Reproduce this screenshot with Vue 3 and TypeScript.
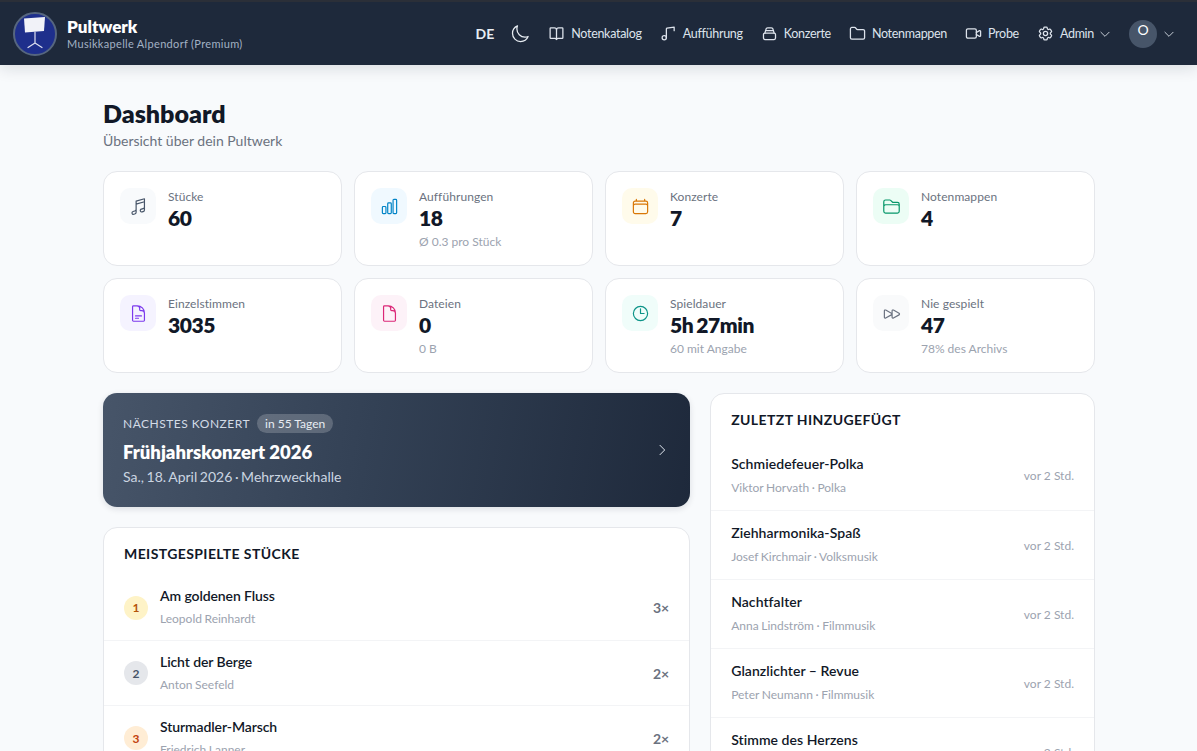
<script setup lang="ts">
interface Stat {
  label: string
  value: string
  sub?: string
  tone: string
  icon: string[]
}

const icons = {
  note: ['m9 9 10.5-3m0 6.553v3.75a2.25 2.25 0 0 1-1.632 2.163l-1.32.377a1.803 1.803 0 1 1-.99-3.467l2.31-.66a2.25 2.25 0 0 0 1.632-2.163Zm0 0V2.25L9 5.25v10.303m0 0v3.75a2.25 2.25 0 0 1-1.632 2.163l-1.32.377a1.803 1.803 0 0 1-.99-3.467l2.31-.66A2.25 2.25 0 0 0 9 15.553Z'],
  chart: ['M3 13.125C3 12.504 3.504 12 4.125 12h2.25c.621 0 1.125.504 1.125 1.125v6.75C7.5 20.496 6.996 21 6.375 21h-2.25A1.125 1.125 0 0 1 3 19.875v-6.75ZM9.75 8.625c0-.621.504-1.125 1.125-1.125h2.25c.621 0 1.125.504 1.125 1.125v11.25c0 .621-.504 1.125-1.125 1.125h-2.25a1.125 1.125 0 0 1-1.125-1.125V8.625ZM16.5 4.125c0-.621.504-1.125 1.125-1.125h2.25C20.496 3 21 3.504 21 4.125v15.75c0 .621-.504 1.125-1.125 1.125h-2.25a1.125 1.125 0 0 1-1.125-1.125V4.125Z'],
  calendar: ['M6.75 3v2.25M17.25 3v2.25M3 18.75V7.5a2.25 2.25 0 0 1 2.25-2.25h13.5A2.25 2.25 0 0 1 21 7.5v11.25m-18 0A2.25 2.25 0 0 0 5.25 21h13.5A2.25 2.25 0 0 0 21 18.75m-18 0v-7.5A2.25 2.25 0 0 1 5.25 9h13.5A2.25 2.25 0 0 1 21 11.25v7.5'],
  folderOpen: ['M2.25 12.75V12A2.25 2.25 0 0 1 4.5 9.75h15A2.25 2.25 0 0 1 21.75 12v.75m-8.69-6.44-2.12-2.12a1.5 1.5 0 0 0-1.061-.44H4.5A2.25 2.25 0 0 0 2.25 6v12a2.25 2.25 0 0 0 2.25 2.25h15A2.25 2.25 0 0 0 21.75 18V9a2.25 2.25 0 0 0-2.25-2.25h-5.379a1.5 1.5 0 0 1-1.06-.44Z'],
  docText: ['M19.5 14.25v-2.625a3.375 3.375 0 0 0-3.375-3.375h-1.5A1.125 1.125 0 0 1 13.5 7.125v-1.5a3.375 3.375 0 0 0-3.375-3.375H8.25m0 12.75h7.5m-7.5 3H12M10.5 2.25H5.625c-.621 0-1.125.504-1.125 1.125v17.25c0 .621.504 1.125 1.125 1.125h12.75c.621 0 1.125-.504 1.125-1.125V11.25a9 9 0 0 0-9-9Z'],
  doc: ['M19.5 14.25v-2.625a3.375 3.375 0 0 0-3.375-3.375h-1.5A1.125 1.125 0 0 1 13.5 7.125v-1.5a3.375 3.375 0 0 0-3.375-3.375H8.25m2.25 0H5.625c-.621 0-1.125.504-1.125 1.125v17.25c0 .621.504 1.125 1.125 1.125h12.75c.621 0 1.125-.504 1.125-1.125V11.25a9 9 0 0 0-9-9Z'],
  clock: ['M12 6v6h4.5m4.5 0a9 9 0 1 1-18 0 9 9 0 0 1 18 0Z'],
  forward: ['M3 8.689c0-.864.933-1.406 1.683-.977l7.108 4.061a1.125 1.125 0 0 1 0 1.954l-7.108 4.061A1.125 1.125 0 0 1 3 16.811V8.69ZM12.75 8.689c0-.864.933-1.406 1.683-.977l7.108 4.061a1.125 1.125 0 0 1 0 1.954l-7.108 4.061a1.125 1.125 0 0 1-1.683-.977V8.69Z'],
  moon: ['M21.752 15.002A9.72 9.72 0 0 1 18 15.75c-5.385 0-9.75-4.365-9.75-9.75 0-1.33.266-2.597.748-3.752A9.753 9.753 0 0 0 3 11.25C3 16.635 7.365 21 12.75 21a9.753 9.753 0 0 0 9.002-5.998Z'],
  book: ['M12 7v13', 'M3 18V5a1 1 0 0 1 1-1h5a3 3 0 0 1 3 3 3 3 0 0 1 3-3h5a1 1 0 0 1 1 1v13a1 1 0 0 1-1 1h-5.5a2.5 2.5 0 0 0-2.5 1.5 2.500 2.500 0 0 0-2.500-1.500H4a1 1 0 0 1-1-1z'],
  music: ['M9 18V5.500a1 1 0 0 1 .800-1L20 3v5'],
  bag: ['M3.500 13.500a2 2 0 0 1 2-2h13a2 2 0 0 1 2 2v5a2 2 0 0 1-2 2h-13a2 2 0 0 1-2-2z', 'M5.500 11.500 7 6a2.500 2.500 0 0 1 2.400-2h5.200A2.500 2.500 0 0 1 17 6l1.500 5.500', 'M6.500 8h11'],
  folder: ['M20 20a2 2 0 0 0 2-2V8.500a2 2 0 0 0-2-2h-7.900a2 2 0 0 1-1.690-.900L9.600 4.400A2 2 0 0 0 7.930 3.500H4a2 2 0 0 0-2 2V18a2 2 0 0 0 2 2Z'],
  video: ['M4 5.500h10a2 2 0 0 1 2 2v9a2 2 0 0 1-2 2H4a2 2 0 0 1-2-2v-9a2 2 0 0 1 2-2Z', 'M16 10.500 20.500 8a1 1 0 0 1 1.500.900v6.200a1 1 0 0 1-1.500.900L16 13.500'],
  gear: ['M9.594 3.940c.090-.542.560-.940 1.110-.940h2.593c.550 0 1.020.398 1.110.940l.213 1.281c.063.374.313.686.645.870.074.040.147.083.220.127.325.196.720.257 1.075.124l1.217-.456a1.125 1.125 0 0 1 1.370.490l1.296 2.247a1.125 1.125 0 0 1-.260 1.431l-1.003.827c-.293.241-.438.613-.430.992a7.723 7.723 0 0 1 0 .255c-.008.378.137.750.430.991l1.004.827c.424.350.534.955.260 1.430l-1.298 2.247a1.125 1.125 0 0 1-1.369.491l-1.217-.456c-.355-.133-.750-.072-1.076.124a6.470 6.470 0 0 1-.220.128c-.331.183-.581.495-.644.869l-.213 1.281c-.090.543-.560.940-1.110.940h-2.594c-.550 0-1.019-.398-1.110-.940l-.213-1.281c-.062-.374-.312-.686-.644-.870a6.520 6.520 0 0 1-.220-.127c-.325-.196-.720-.257-1.076-.124l-1.217.456a1.125 1.125 0 0 1-1.369-.490l-1.297-2.247a1.125 1.125 0 0 1 .260-1.431l1.004-.827c.292-.240.437-.613.430-.991a6.932 6.932 0 0 1 0-.255c.007-.380-.138-.751-.430-.992l-1.004-.827a1.125 1.125 0 0 1-.260-1.430l1.297-2.247a1.125 1.125 0 0 1 1.370-.491l1.216.456c.356.133.751.072 1.076-.124.072-.044.146-.086.220-.128.332-.183.582-.495.644-.869l.214-1.280Z', 'M15 12a3 3 0 1 1-6 0 3 3 0 0 1 6 0Z'],
  chevronDown: ['m5 9 7 7 7-7'],
  chevronRight: ['m9 5 7 7-7 7']
}

const navItems = [
  { label: 'Notenkatalog', icon: icons.book },
  { label: 'Aufführung', icon: icons.music, dot: true },
  { label: 'Konzerte', icon: icons.bag },
  { label: 'Notenmappen', icon: icons.folder },
  { label: 'Probe', icon: icons.video }
]

const stats: Stat[] = [
  { label: 'Stücke', value: '60', tone: 'slate', icon: icons.note },
  { label: 'Aufführungen', value: '18', sub: 'Ø 0.3 pro Stück', tone: 'blue', icon: icons.chart },
  { label: 'Konzerte', value: '7', tone: 'amber', icon: icons.calendar },
  { label: 'Notenmappen', value: '4', tone: 'green', icon: icons.folderOpen },
  { label: 'Einzelstimmen', value: '3035', tone: 'violet', icon: icons.docText },
  { label: 'Dateien', value: '0', sub: '0 B', tone: 'pink', icon: icons.doc },
  { label: 'Spieldauer', value: '5h 27min', sub: '60 mit Angabe', tone: 'teal', icon: icons.clock },
  { label: 'Nie gespielt', value: '47', sub: '78% des Archivs', tone: 'gray', icon: icons.forward }
]

const topPieces = [
  { rank: 1, title: 'Am goldenen Fluss', composer: 'Leopold Reinhardt', count: 3 },
  { rank: 2, title: 'Licht der Berge', composer: 'Anton Seefeld', count: 2 },
  { rank: 3, title: 'Sturmadler-Marsch', composer: 'Friedrich Lanner', count: 2 }
]

const recent = [
  { title: 'Schmiedefeuer-Polka', composer: 'Viktor Horvath', genre: 'Polka' },
  { title: 'Ziehharmonika-Spaß', composer: 'Josef Kirchmair', genre: 'Volksmusik' },
  { title: 'Nachtfalter', composer: 'Anna Lindström', genre: 'Filmmusik' },
  { title: 'Glanzlichter – Revue', composer: 'Peter Neumann', genre: 'Filmmusik' },
  { title: 'Stimme des Herzens', composer: 'Maria Hofer', genre: 'Ballade' }
]
</script>

<template>
  <div class="page">
    <header class="topbar">
      <div class="brand">
        <svg class="logo" viewBox="0 0 44 44">
          <circle cx="22" cy="22" r="21" fill="#1e2f8c" stroke="#56667f" stroke-width="2" />
          <path d="M11 6.500 32 5 31 19 12 20.500Z" fill="#f1f2f8" />
          <path d="M22 20v11M22 31l-7 4.500M22 31l7 4.500" fill="none" stroke="#dfe2f0" stroke-width="1.200" />
        </svg>
        <div>
          <div class="brand-name">Pultwerk</div>
          <div class="brand-sub">Musikkapelle Alpendorf (Premium)</div>
        </div>
      </div>
      <nav class="nav">
        <span class="lang">DE</span>
        <svg class="moon" viewBox="0 0 24 24"><path v-for="d in icons.moon" :key="d" :d="d" /></svg>
        <a v-for="item in navItems" :key="item.label" class="nav-item">
          <svg class="nav-icon" viewBox="0 0 24 24">
            <path v-for="d in item.icon" :key="d" :d="d" />
            <circle v-if="item.dot" cx="6" cy="18" r="3" />
          </svg>
          {{ item.label }}
        </a>
        <a class="nav-item">
          <svg class="nav-icon" viewBox="0 0 24 24"><path v-for="d in icons.gear" :key="d" :d="d" /></svg>
          Admin
          <svg class="chev" viewBox="0 0 24 24"><path v-for="d in icons.chevronDown" :key="d" :d="d" /></svg>
        </a>
        <div class="user">
          <span class="avatar">O</span>
          <svg class="chev" viewBox="0 0 24 24"><path v-for="d in icons.chevronDown" :key="d" :d="d" /></svg>
        </div>
      </nav>
    </header>

    <main class="main">
      <h1>Dashboard</h1>
      <p class="lead">Übersicht über dein Pultwerk</p>

      <section class="stats">
        <div v-for="s in stats" :key="s.label" class="card stat">
          <div class="stat-icon" :class="s.tone">
            <svg viewBox="0 0 24 24"><path v-for="d in s.icon" :key="d" :d="d" /></svg>
          </div>
          <div>
            <div class="stat-label">{{ s.label }}</div>
            <div class="stat-value">{{ s.value }}</div>
            <div v-if="s.sub" class="stat-sub">{{ s.sub }}</div>
          </div>
        </div>
      </section>

      <section class="columns">
        <div class="left">
          <div class="hero">
            <div>
              <div class="hero-top">
                <span class="hero-kicker">NÄCHSTES KONZERT</span>
                <span class="hero-pill">in 55 Tagen</span>
              </div>
              <div class="hero-title">Frühjahrskonzert 2026</div>
              <div class="hero-sub">Sa., 18. April 2026 · Mehrzweckhalle</div>
            </div>
            <svg class="hero-chev" viewBox="0 0 24 24"><path v-for="d in icons.chevronRight" :key="d" :d="d" /></svg>
          </div>

          <div class="card list">
            <h2>MEISTGESPIELTE STÜCKE</h2>
            <div v-for="p in topPieces" :key="p.rank" class="row top-row">
              <span class="rank" :class="'rank' + p.rank">{{ p.rank }}</span>
              <div class="row-main">
                <div class="row-title">{{ p.title }}</div>
                <div class="row-sub">{{ p.composer }}</div>
              </div>
              <span class="count">{{ p.count }}×</span>
            </div>
          </div>
        </div>

        <div class="card list right">
          <h2>ZULETZT HINZUGEFÜGT</h2>
          <div v-for="r in recent" :key="r.title" class="row recent-row">
            <div class="row-main">
              <div class="row-title">{{ r.title }}</div>
              <div class="row-sub">{{ r.composer }} · {{ r.genre }}</div>
            </div>
            <span class="ago">vor 2 Std.</span>
          </div>
        </div>
      </section>
    </main>
  </div>
</template>

<style>
html,
body {
  margin: 0;
  background: #f8fafc;
}
</style>

<style scoped>
.page {
  height: 751px;
  overflow: hidden;
  background: #f8fafc;
  font-family: Lato, "Noto Sans", sans-serif;
  color: #111827;
}
svg {
  fill: none;
  stroke: currentColor;
  stroke-width: 1.5;
  stroke-linecap: round;
  stroke-linejoin: round;
}
.topbar {
  height: 63px;
  border-top: 2px solid #2b2f38;
  background: #1e293b;
  display: flex;
  align-items: center;
  justify-content: space-between;
  padding: 0 21px 0 13px;
  box-shadow: 0 4px 14px rgba(15, 23, 42, 0.12);
  position: relative;
}
.brand {
  display: flex;
  align-items: center;
  gap: 10px;
}
.logo {
  width: 44px;
  height: 44px;
  stroke: none;
}
.brand-name {
  font-size: 17px;
  font-weight: 800;
  line-height: 21px;
  color: #fff;
}
.brand-sub {
  font-size: 11px;
  line-height: 14px;
  letter-spacing: 0.320px;
  color: #a3b1c4;
}
.nav {
  display: flex;
  align-items: center;
  gap: 18px;
  color: #dde3ec;
}
.lang {
  font-size: 14px;
  font-weight: 700;
  color: #e8edf3;
}
.moon {
  width: 20px;
  height: 20px;
  color: #e8edf3;
  margin-left: -2px;
}
.nav-item {
  display: flex;
  align-items: center;
  gap: 6px;
  font-size: 12.500px;
  letter-spacing: -0.300px;
}
.nav-icon {
  width: 17px;
  height: 17px;
  stroke-width: 1.800;
}
.chev {
  width: 14px;
  height: 14px;
}
.nav-item .chev {
  margin-left: -2px;
}
.user {
  display: flex;
  align-items: center;
  gap: 5px;
  margin-left: -1px;
}
.avatar {
  width: 28px;
  height: 28px;
  border-radius: 50%;
  background: #475569;
  color: #fff;
  font-size: 14px;
  line-height: 19px;
  text-align: center;
}
.main {
  width: 992px;
  margin-left: 103px;
  padding-top: 33px;
}
h1 {
  margin: 0;
  font-size: 25px;
  font-weight: 800;
  line-height: 30px;
}
.lead {
  margin: 3px 0 0;
  font-size: 14px;
  line-height: 20px;
  color: #6b7280;
}
.card {
  background: #fff;
  border: 1px solid #e5e7eb;
  border-radius: 14px;
}
.stats {
  display: grid;
  grid-template-columns: repeat(4, 1fr);
  gap: 12px;
  margin-top: 20px;
}
.stat {
  height: 95px;
  box-sizing: border-box;
  padding: 16px;
  display: flex;
  gap: 12px;
  align-items: flex-start;
}
.stat-icon {
  width: 36px;
  height: 36px;
  border-radius: 10px;
  display: flex;
  align-items: center;
  justify-content: center;
  flex-shrink: 0;
}
.stat-icon svg {
  width: 19px;
  height: 19px;
}
.slate { background: #f8fafc; color: #475569; }
.blue { background: #f0f9ff; color: #0284c7; }
.amber { background: #fffbeb; color: #d97706; }
.green { background: #ecfdf5; color: #059669; }
.violet { background: #f5f3ff; color: #7c3aed; }
.pink { background: #fdf2f8; color: #db2777; }
.teal { background: #f0fdfa; color: #0d9488; }
.gray { background: #f9fafb; color: #6b7280; }
.stat-label {
  font-size: 12px;
  line-height: 16px;
  letter-spacing: 0.080px;
  margin-top: 1px;
  color: #6b7280;
}
.stat-value {
  font-size: 21px;
  font-weight: 800;
  line-height: 28px;
  letter-spacing: -0.400px;
  word-spacing: -1.500px;
  margin-top: -1px;
  color: #111827;
}
.stat-sub {
  font-size: 12px;
  line-height: 16px;
  margin-top: 2px;
  color: #9ca3af;
}
.columns {
  display: grid;
  grid-template-columns: repeat(5, 1fr);
  gap: 20px;
  margin-top: 20px;
}
.left {
  grid-column: span 3;
  display: flex;
  flex-direction: column;
  gap: 20px;
}
.right {
  grid-column: span 2;
}
.hero {
  height: 114px;
  box-sizing: border-box;
  padding: 0 20px;
  border-radius: 14px;
  background: linear-gradient(100deg, #475569 0%, #334155 45%, #1e293b 100%);
  color: #fff;
  display: flex;
  align-items: center;
  justify-content: space-between;
  box-shadow: 0 2px 6px rgba(15, 23, 42, 0.12);
}
.hero-top {
  display: flex;
  align-items: center;
  gap: 7px;
}
.hero-kicker {
  font-size: 12px;
  letter-spacing: 0.500px;
  color: #d3dbe6;
}
.hero-pill {
  font-size: 12px;
  padding: 2px 8px;
  border-radius: 10px;
  background: rgba(255, 255, 255, 0.2);
  color: #e8edf3;
}
.hero-title {
  font-size: 18.500px;
  font-weight: 800;
  line-height: 26px;
  margin-top: 6px;
}
.hero-sub {
  font-size: 14px;
  line-height: 20px;
  word-spacing: -1px;
  margin-top: 2px;
  color: #cbd5e1;
}
.hero-chev {
  width: 16px;
  height: 16px;
  color: #e2e8f0;
}
.list h2 {
  margin: 0;
  padding: 16px 20px 11px;
  font-size: 14px;
  font-weight: 700;
  line-height: 20px;
  letter-spacing: 0.400px;
}
.row {
  display: flex;
  align-items: center;
  padding: 0 20px;
  box-sizing: border-box;
}
.row + .row {
  border-top: 1px solid #f3f4f6;
}
.top-row {
  height: 65px;
  gap: 12px;
}
.top-row .row-main {
  margin-top: -2px;
}
.top-row .row-title {
  letter-spacing: -0.100px;
}
.top-row .row-sub {
  margin-top: 5px;
}
.recent-row {
  height: 69px;
}
.recent-row .row-main {
  margin-top: -2px;
}
.row-main {
  flex: 1;
  min-width: 0;
}
.row-title {
  font-size: 14px;
  font-weight: 600;
  line-height: 20px;
  letter-spacing: 0.050px;
}
.row-sub {
  font-size: 12px;
  line-height: 16px;
  word-spacing: -0.500px;
  margin-top: 6px;
  color: #9ca3af;
}
.rank {
  width: 24px;
  height: 24px;
  border-radius: 50%;
  display: flex;
  align-items: center;
  justify-content: center;
  font-size: 12px;
  font-weight: 700;
}
.rank1 { background: #fef3c7; color: #b45309; }
.rank2 { background: #e5e7eb; color: #475569; }
.rank3 { background: #ffedd5; color: #c2410c; }
.count {
  font-size: 14px;
  font-weight: 700;
  color: #6b7280;
}
.ago {
  font-size: 12px;
  color: #9ca3af;
}
</style>
